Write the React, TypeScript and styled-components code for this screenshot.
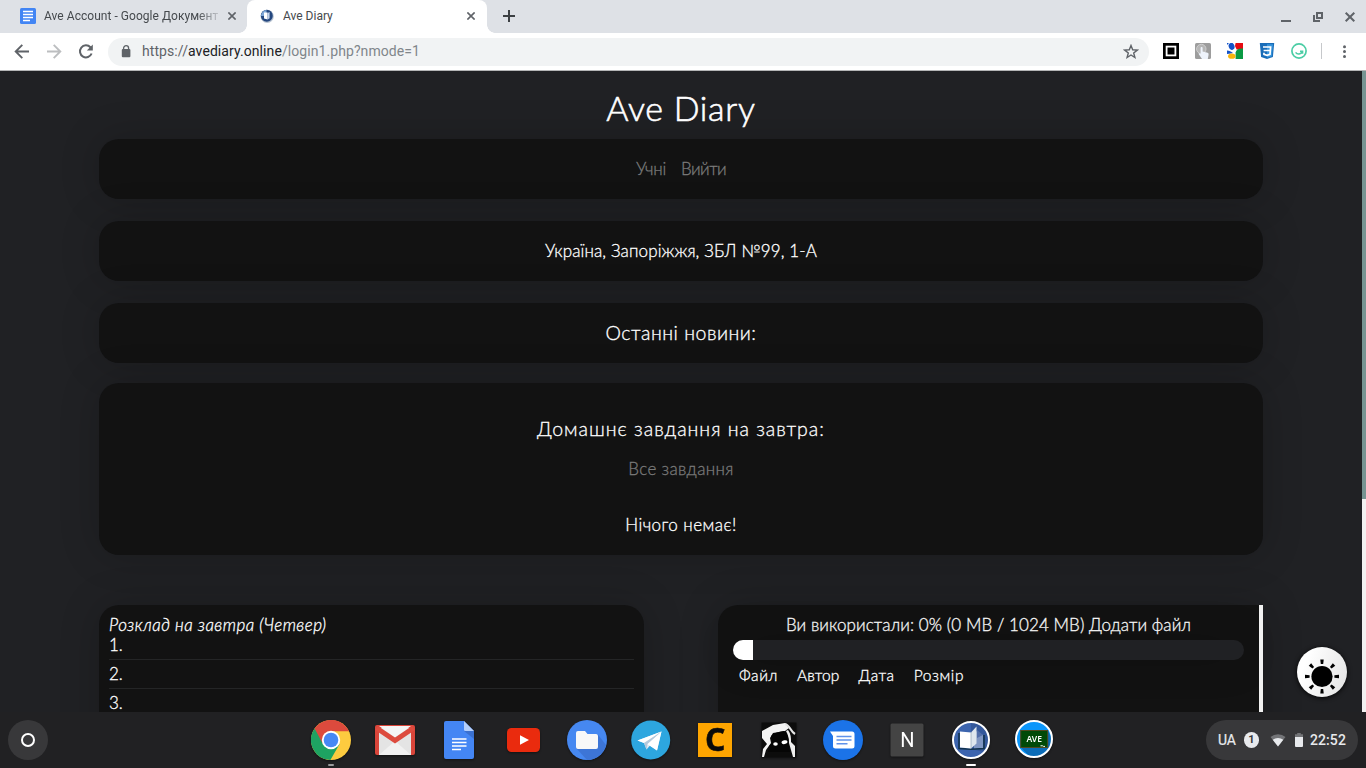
import React from "react";
import styled, { createGlobalStyle } from "styled-components";

const GlobalStyle = createGlobalStyle`
  * { box-sizing: border-box; }
  html, body { margin: 0; padding: 0; overflow: hidden; }
  body { font-family: Roboto, sans-serif; background: #202124; }
  svg { display: block; flex: none; }
`;

const Screen = styled.div`
  width: 1366px;
  height: 768px;
  display: flex;
  flex-direction: column;
  overflow: hidden;
`;

/* ---------- browser chrome ---------- */

const TabStrip = styled.div`
  height: 33px;
  flex: none;
  display: flex;
  background: #dee1e6;
`;

const Tab = styled.div<{ $active?: boolean; $width: number }>`
  position: relative;
  width: ${(p) => p.$width}px;
  height: 33px;
  padding: 0 ${(p) => (p.$active ? 12 : 11)}px 1px ${(p) => (p.$active ? 12 : 20)}px;
  display: flex;
  align-items: center;
  background: ${(p) => (p.$active ? "#fff" : "transparent")};
  border-radius: 8px 8px 0 0;
  ${(p) =>
    p.$active &&
    `&::before, &::after {
      content: "";
      position: absolute;
      bottom: 0;
      width: 8px;
      height: 8px;
    }
    &::before { left: -8px; background: radial-gradient(circle at 0 0, transparent 7.5px, #fff 8px); }
    &::after { right: -8px; background: radial-gradient(circle at 100% 0, transparent 7.5px, #fff 8px); }`}
`;

const TabTitle = styled.span<{ $fade?: boolean }>`
  flex: 1;
  margin: 0 10px 0 8px;
  font-size: 12px;
  line-height: 16px;
  letter-spacing: ${(p) => (p.$fade ? "0.04px" : "0")};
  color: #45494d;
  white-space: nowrap;
  overflow: hidden;
  ${(p) => p.$fade && "mask-image: linear-gradient(90deg, #000 88%, transparent 103%);"}
`;

const NewTab = styled.div`
  width: 44px;
  display: flex;
  align-items: center;
  justify-content: center;
  padding-bottom: 1px;
`;

const WindowButtons = styled.div`
  margin-left: auto;
  display: flex;
  align-items: center;
  & > svg { margin: 1px 8px 0; }
`;

const Toolbar = styled.div`
  height: 38px;
  flex: none;
  display: flex;
  align-items: center;
  background: #fff;
  border-bottom: 1px solid #b4b5b6;
`;

const NavButtons = styled.div`
  width: 108px;
  display: flex;
  gap: 12px;
  padding-left: 12px;
`;

const Omnibox = styled.div`
  width: 1041px;
  height: 28px;
  border-radius: 14px;
  background: #f1f3f4;
  display: flex;
  align-items: center;
  padding: 0 10px 0 13px;
`;

const Url = styled.span`
  margin: -2px 0 0 11px;
  flex: 1;
  font-size: 14px;
  line-height: 16px;
  letter-spacing: 0.08px;
  color: #80868b;
  & > b { font-weight: 400; color: #202124; }
  & > i { font-style: normal; color: #5f6368; }
`;

const Extensions = styled.div`
  display: flex;
  align-items: center;
  gap: 16px;
  margin: -1px 0 0 14px;
`;

const Separator = styled.div`
  width: 1px;
  height: 16px;
  margin: -1px 15px 0 14px;
  background: #c6c8cb;
`;

/* ---------- page ---------- */

const Viewport = styled.div`
  height: 641px;
  flex: none;
  display: flex;
  overflow: hidden;
  background: #202124;
`;

const Page = styled.main`
  position: relative;
  width: 1362px;
  padding: 0 99px;
  font-family: Lato, "Noto Sans", sans-serif;
  font-weight: 300;
  color: #fff;
  -webkit-text-stroke: 0.3px currentColor;
  overflow: hidden;
`;

const PageScroll = styled.div`
  width: 4px;
  background: #f1f1f1;
`;

const PageThumb = styled.div`
  height: 428px;
  background: #769492;
`;

const Line = styled.div<{ $size: number; $track?: number; $muted?: boolean; $top?: number }>`
  margin-top: ${(p) => p.$top ?? 0}px;
  font-size: ${(p) => p.$size}px;
  line-height: 20px;
  letter-spacing: ${(p) => p.$track ?? 0}px;
  color: ${(p) => (p.$muted ? "#7a7a7a" : "#fff")};
  -webkit-text-stroke-color: currentColor;
  white-space: nowrap;
`;

const Title = styled.h1`
  height: 68px;
  margin: 0;
  padding-top: 17px;
  font-size: 34px;
  font-weight: 300;
  line-height: 40px;
  letter-spacing: 0.7px;
  text-align: center;
  -webkit-text-stroke: 0.6px #fff;
`;

const Card = styled.section<{ $height: number; $gap: number }>`
  height: ${(p) => p.$height}px;
  margin-bottom: ${(p) => p.$gap}px;
  border-radius: 20px;
  background: #121212;
  box-shadow: 0 0 40px rgba(0, 0, 0, 0.2);
  display: flex;
  flex-direction: column;
  align-items: center;
  justify-content: center;
`;

const Menu = styled.nav`
  display: flex;
  gap: 15px;
`;

const Homework = styled(Card)`
  justify-content: flex-start;
  padding-top: 36px;
`;

const Columns = styled.div`
  display: flex;
  justify-content: space-between;
`;

const Panel = styled.section<{ $squareRight?: boolean }>`
  width: 545px;
  height: 200px;
  border-radius: ${(p) => (p.$squareRight ? "20px 0 0 20px" : "20px")};
  background: #121212;
  box-shadow: 0 0 40px rgba(0, 0, 0, 0.2);
  display: flex;
`;

const Schedule = styled.div`
  flex: 1;
  padding: 10px 10px 0;
`;

const Day = styled(Line)`
  font-style: italic;
`;

const Lesson = styled.div`
  height: 20px;
  margin-bottom: 9px;
  position: relative;
  font-size: 17px;
  line-height: 19px;
  &::after {
    content: "";
    position: absolute;
    left: 0;
    right: 0;
    bottom: -5px;
    height: 1px;
    background: #242526;
  }
`;

const Storage = styled.div`
  flex: 1;
  padding: 10px 15px 0;
  display: flex;
  flex-direction: column;
  align-items: center;
`;

const Meter = styled.div`
  width: 511px;
  height: 20px;
  margin-top: 5px;
  border-radius: 10px;
  background: #202124;
  box-shadow: 0 0 40px rgba(0, 0, 0, 0.2);
  overflow: hidden;
`;

const MeterFill = styled.div`
  width: 20px;
  height: 20px;
  background: #fff;
`;

const Headings = styled.div`
  align-self: stretch;
  display: flex;
  gap: 19px;
  padding: 5px 0 0 6px;
`;

const PanelScroll = styled.div`
  width: 4px;
  background: #f1f1f1;
`;

const ThemeToggle = styled.button`
  position: absolute;
  left: 1297px;
  top: 576px;
  width: 50px;
  height: 50px;
  padding: 0;
  border: 0;
  border-radius: 50%;
  background: linear-gradient(110deg, #fff 20%, #e2e2e2);
  box-shadow: 0 1px 5px rgba(0, 0, 0, 0.9);
`;

/* ---------- shelf ---------- */

const Shelf = styled.footer`
  height: 56px;
  flex: none;
  display: grid;
  grid-template-columns: 299px 768px 299px;
  align-items: center;
  background: #212123;
`;

const Launcher = styled.div`
  width: 40px;
  height: 40px;
  margin-left: 8px;
  border-radius: 50%;
  background: #38383a;
  display: flex;
  align-items: center;
  justify-content: center;
`;

const Ring = styled.div`
  width: 14px;
  height: 14px;
  border: 2px solid #fff;
  border-radius: 50%;
`;

const Apps = styled.div`
  display: flex;
`;

const ShelfApp = styled.div<{ $mark?: string; $markWidth?: number }>`
  position: relative;
  width: 64px;
  height: 56px;
  display: flex;
  align-items: center;
  justify-content: center;
  & > svg { filter: drop-shadow(0 1px 1px rgba(0, 0, 0, 0.45)); }
  ${(p) =>
    p.$mark &&
    `&::after {
      content: "";
      position: absolute;
      bottom: 2px;
      left: ${32 - (p.$markWidth ?? 6) / 2}px;
      width: ${p.$markWidth}px;
      height: 2px;
      border-radius: 1px;
      background: ${p.$mark};
    }`}
`;

const Tray = styled.div`
  width: 152px;
  height: 40px;
  margin-left: auto;
  margin-right: 8px;
  padding: 0 12px;
  border-radius: 20px;
  background: #38383a;
  display: flex;
  align-items: center;
  color: #e8eaed;
  font-size: 14px;
  font-weight: 500;
`;

const Language = styled.span`
  font-size: 14px;
  font-weight: 400;
  letter-spacing: -0.2px;
  -webkit-text-stroke: 0.2px #e8eaed;
`;

const Badge = styled.span`
  width: 16px;
  height: 16px;
  margin: 0 11px 0 8px;
  border-radius: 50%;
  background: #e8eaed;
  color: #37383b;
  font-size: 11px;
  font-weight: 700;
  line-height: 16px;
  text-align: center;
`;

const Clock = styled.span`
  margin-left: 7px;
  letter-spacing: 0.1px;
`;

const CloseX = () => (
  <svg width="8" height="8" viewBox="0 0 8 8" stroke="#5f6368" strokeWidth="1.6">
    <path d="M0.4 0.4 7.6 7.6M7.6 0.4 0.4 7.6" />
  </svg>
);

const RAYS = [0, 45, 90, 135, 180, 225, 270, 315];

export default function App() {
  return (
    <Screen>
      <GlobalStyle />
      <TabStrip>
        <Tab $width={247}>
          <svg width="16" height="16" viewBox="0 0 16 16">
            <rect width="16" height="16" rx="1.5" fill="#4285f4" />
            <path d="M3 4h10M3 7h10M3 10h10M3 13h7" transform="translate(0 -.5)" stroke="#fff" strokeWidth="1.6" />
          </svg>
          <TabTitle $fade>Ave Account - Google Документы</TabTitle>
          <CloseX />
        </Tab>
        <Tab $width={240} $active>
          <svg width="16" height="16" viewBox="0 0 16 16">
            <circle cx="8.2" cy="8.4" r="6.6" fill="#b9c4d2" />
            <circle cx="7.8" cy="7.8" r="6" fill="#24477f" />
            <path d="M2 8a6 6 0 0 1 5.500-6V5L4.500 8z" fill="#7fa8d8" />
            <path d="M5 4.600h3.600v6.800L5 10.600z" fill="#fff" />
            <path d="M8.600 5 10.600 4v6.200l-2 1.200z" fill="#c5d5ec" />
          </svg>
          <TabTitle>Ave Diary</TabTitle>
          <CloseX />
        </Tab>
        <NewTab>
          <svg width="12" height="12" viewBox="0 0 12 12" stroke="#3c4043" strokeWidth="2">
            <path d="M6 0v12M0 6h12" />
          </svg>
        </NewTab>
        <WindowButtons>
          <svg width="16" height="16" viewBox="0 0 16 16"><path d="M3 12h10" stroke="#5f6368" strokeWidth="2" /></svg>
          <svg width="16" height="16" viewBox="0 0 16 16" fill="none" stroke="#5f6368" strokeWidth="2">
            <path d="M7 4h5v5H7z" />
            <path d="M4 6v6h6" />
          </svg>
          <svg width="16" height="16" viewBox="0 0 16 16"><path d="m3.700 3.700 8.600 8.600M12.300 3.700l-8.600 8.600" stroke="#5f6368" strokeWidth="2" /></svg>
        </WindowButtons>
      </TabStrip>

      <Toolbar>
        <NavButtons>
          <svg width="20" height="20" viewBox="0 0 20 20" fill="none" stroke="#5f6368" strokeWidth="1.9">
            <path d="M17 9.500H4M10.300 2.900 3.700 9.500l6.600 6.600" />
          </svg>
          <svg width="20" height="20" viewBox="0 0 20 20" fill="none" stroke="#bcbec0" strokeWidth="1.900">
            <path d="M3 9.500h13M9.700 2.900l6.600 6.600-6.600 6.600" />
          </svg>
          <svg width="20" height="20" viewBox="0 0 20 20" fill="none" stroke="#5f6368" strokeWidth="2">
            <path d="M15.600 11.500A6 6 0 1 1 14.400 5.300L15.600 6.500" />
            <path d="M16.800 2.500v6h-6z" fill="#5f6368" stroke="none" />
          </svg>
        </NavButtons>
        <Omnibox>
          <svg width="10" height="14" viewBox="0 0 10 14">
            <rect x="0.800" y="4" width="8.600" height="8.200" rx="1" fill="#5f6368" />
            <path d="M2.600 4.500V3.200a2.500 2.500 0 0 1 5 0v1.300" fill="none" stroke="#5f6368" strokeWidth="1.300" />
          </svg>
          <Url><i>https://</i><b>avediary.online</b>/login1.php?nmode=1</Url>
          <svg width="16" height="16" viewBox="0 0 16 16" fill="none" stroke="#5f6368" strokeWidth="1.400">
            <path d="m8 1.500 1.700 4.300 4.600.3-3.600 2.900 1.200 4.500L8 11l-3.900 2.500 1.200-4.500L1.700 6.100l4.600-.3z" />
          </svg>
        </Omnibox>
        <Extensions>
          <svg width="16" height="16" viewBox="0 0 16 16">
            <rect width="16" height="16" fill="#000" />
            <rect x="3.600" y="3.600" width="8.800" height="8.800" fill="#000" stroke="#fff" strokeWidth="1.800" />
          </svg>
          <svg width="16" height="16" viewBox="0 0 16 16">
            <rect width="16" height="16" rx="1.500" fill="#9d9d9d" />
            <circle cx="6.300" cy="6" r="4.700" fill="#b5b5b5" stroke="#cfcfcf" />
            <path d="M5.600 5c0-1.400 2-1.400 2 0v3.600l5 1.200c1.200.4 1.200 1.400.8 3l-.6 3.200H7L4 11.400c-.8-1 .3-1.800 1.600-.4z" fill="#eef3fb" />
          </svg>
          <svg width="16" height="16" viewBox="0 0 16 16">
            <path fill="#fff" d="M0 0h16v16H0z" />
            <path fill="#e60b12" d="M8.600 0H16v6.600H9.600L8 3z" />
            <path fill="#0a9a43" d="M16 5.600V16H8.600V9.400C9.400 6.600 11.600 5 16 5.600z" />
            <ellipse cx="4.600" cy="3.400" rx="2.900" ry="3.600" transform="rotate(-18 4.600 3.400)" fill="#1453c8" />
            <path fill="#1453c8" d="M0 0h2L0 2zM0 7.400c2.400.4 4 .7 6 2.600L3.800 10.600 0 11z" />
            <ellipse cx="4.800" cy="13.200" rx="3.700" ry="2.600" fill="#f8b60c" />
          </svg>
          <svg width="16" height="16" viewBox="0 0 16 16">
            <path fill="#1a6db8" d="M.8 0h14.400l-1.300 14L8 16l-5.900-2z" />
            <path fill="#3694dc" d="M8 1.200h6l-1.100 12L8 14.800z" />
            <path d="M4 4h7.600l-.6 7.300L8 12.400l-3-1-.1-1.700M4.600 7.500h6.400" fill="none" stroke="#fff" strokeWidth="1.700" />
          </svg>
          <svg width="16" height="16" viewBox="0 0 16 16" fill="none" stroke="#4bcda5">
            <circle cx="8" cy="8" r="7.100" strokeWidth="1.700" />
            <path d="M4.600 9.400a3.700 3.700 0 0 0 6.600-.8M9 8.200h2.600v2.600" strokeWidth="1.500" />
          </svg>
        </Extensions>
        <Separator />
        <svg width="16" height="16" viewBox="0 0 16 16" fill="#5f6368">
          <circle cx="7.500" cy="2.800" r="1.500" /><circle cx="7.500" cy="7.600" r="1.500" /><circle cx="7.500" cy="12.400" r="1.500" />
        </svg>
      </Toolbar>

      <Viewport>
        <Page>
          <Title>Ave Diary</Title>
          <Card $height={60} $gap={22}>
            <Menu>
              <Line $size={17} $track={-0.25} $muted>Учні</Line>
              <Line $size={17} $track={-0.55} $muted>Вийти</Line>
            </Menu>
          </Card>
          <Card $height={60} $gap={22}>
            <Line $size={17} $track={0.13}>Україна, Запоріжжя, ЗБЛ №99, 1-А</Line>
          </Card>
          <Card $height={60} $gap={20}>
            <Line $size={19.5} $track={0.5}>Останні новини:</Line>
          </Card>
          <Homework $height={172} $gap={50}>
            <Line $size={19.5} $track={0.97}>Домашнє завдання на завтра:</Line>
            <Line $size={17} $track={0.35} $muted $top={20}>Все завдання</Line>
            <Line $size={17} $track={0.45} $top={36}>Нічого немає!</Line>
          </Homework>
          <Columns>
            <Panel>
              <Schedule>
                <Day $size={17} $track={0.43}>Розклад на завтра (Четвер)</Day>
                <Lesson>1.</Lesson>
                <Lesson>2.</Lesson>
                <Lesson>3.</Lesson>
              </Schedule>
            </Panel>
            <Panel $squareRight>
              <Storage>
                <Line $size={17} $track={0.08}>Ви використали: 0% (0 MB / 1024 MB) Додати файл</Line>
                <Meter><MeterFill /></Meter>
                <Headings>
                  <Line $size={15.5} $track={0.6}>Файл</Line>
                  <Line $size={15.5} $track={0.1}>Автор</Line>
                  <Line $size={15.5} $track={0.55}>Дата</Line>
                  <Line $size={15.5} $track={0.65}>Розмір</Line>
                </Headings>
              </Storage>
              <PanelScroll />
            </Panel>
          </Columns>
          <ThemeToggle aria-label="Theme">
            <svg width="50" height="50" viewBox="0 0 50 50">
              <circle cx="25" cy="29.500" r="10.600" />
              {RAYS.map((a) => (
                <path key={a} d="M23.300 12.500h3.400l-.5 4.600h-2.400z" transform={`rotate(${a} 25 29.500)`} />
              ))}
            </svg>
          </ThemeToggle>
        </Page>
        <PageScroll><PageThumb /></PageScroll>
      </Viewport>

      <Shelf>
        <Launcher><Ring /></Launcher>
        <Apps>
          <ShelfApp $mark="#9a9b9d" $markWidth={6}>
            <svg width="40" height="40" viewBox="0 0 40 40">
              <circle cx="20" cy="20" r="20" fill="#fdcb3f" />
              <path d="M20 20 3.600 8.600A20 20 0 0 0 19.400 40L28.600 24z" fill="#1ea362" />
              <path d="M3.600 8.600A20 20 0 0 1 38 11.200H20l-8.500 12z" fill="#dc4a3d" />
              <circle cx="20" cy="20" r="9.200" fill="#fff" />
              <circle cx="20" cy="20" r="7.300" fill="#4688f4" />
            </svg>
          </ShelfApp>
          <ShelfApp>
            <svg width="40" height="30" viewBox="0 0 40 30">
              <rect width="40" height="30" rx="2" fill="#d9453a" />
              <path d="M4 3h32v27H4z" fill="#e4e4e4" />
              <path d="M4 30 20 16l16 14z" fill="#f1f1f1" />
              <path d="M4 1h32L20 12.500z" fill="#f5f5f5" />
              <path d="M1.500 3 20 15.500 38.500 3" fill="none" stroke="#dd4b3e" strokeWidth="5" />
            </svg>
          </ShelfApp>
          <ShelfApp>
            <svg width="30" height="38" viewBox="0 0 30 38">
              <path d="M2 0h18l10 10v26a2 2 0 0 1-2 2H2a2 2 0 0 1-2-2V2a2 2 0 0 1 2-2z" fill="#4486f4" />
              <path d="m20 10 10 8v-8z" fill="#3a70d0" />
              <path d="M20 0v8.500a1.500 1.500 0 0 0 1.500 1.500H30z" fill="#b4cffb" />
              <path d="M8 18h14.500M8 21.500h14.500M8 25h14.500M8 28.500h9" stroke="#fff" strokeWidth="1.700" />
            </svg>
          </ShelfApp>
          <ShelfApp>
            <svg width="33" height="24" viewBox="0 0 33 24">
              <rect width="33" height="24" rx="4.500" fill="#ea2b0e" />
              <path d="M13 7.200 22 12l-9 4.800z" fill="#fff" />
            </svg>
          </ShelfApp>
          <ShelfApp>
            <svg width="40" height="40" viewBox="0 0 40 40">
              <circle cx="20" cy="20" r="20" fill="#4688f1" />
              <path d="M9 28 20 39.900A20 20 0 0 0 39 25L30.500 14z" fill="#3d75d6" />
              <path d="M11 11h7l2.500 3H29a2 2 0 0 1 2 2v11a2 2 0 0 1-2 2H11a2 2 0 0 1-2-2V13a2 2 0 0 1 2-2z" fill="#f8f8f8" />
            </svg>
          </ShelfApp>
          <ShelfApp>
            <svg width="40" height="40" viewBox="0 0 40 40">
              <circle cx="19.700" cy="20" r="19.500" fill="#2da6df" />
              <path d="m6.500 20.500 24-9-4.500 19-7-5-3.500 4-2.500-6.500z" fill="#dfe9f3" />
              <path d="m6.500 20.500 24-9L13 23zM30.500 11.500 26 30.500 16 24z" fill="#fff" />
              <path d="m13 23 2.500 6.500 1-5.500 14-12.500z" fill="#b4c9dc" />
            </svg>
          </ShelfApp>
          <ShelfApp>
            <svg width="34" height="34" viewBox="0 0 34 34">
              <rect width="34" height="34" fill="#fea500" />
              <text x="17.300" y="28.400" textAnchor="middle" fontFamily="Open Sans" fontWeight="700" fontSize="32" fill="#0a0a0a" stroke="#0a0a0a" strokeWidth="0.600">C</text>
            </svg>
          </ShelfApp>
          <ShelfApp>
            <svg width="36" height="36" viewBox="0 0 36 36">
              <rect x="0.500" y="0.500" width="35" height="35" fill="#0c0c0c" />
              <path d="M1 9 12 3l12-2 4 5-4 3-12 2-3 5 1 5-5 7-2 7H1l1-8 4-5-5-6z" fill="#f4f4f4" />
              <path d="M27 8c3 4 3 8 3 12l4 4v11h-2l-4-14c0-5-1-8-3-12z" fill="#efefef" />
              <path d="M24 2c5 1 5 7 10 10" fill="none" stroke="#e4e4e4" strokeWidth="2.200" />
              <path d="M10 14c3-3 7-4 13-5 4 3 5 8 4.500 13l1.500 8H7l1-6 3-3z" fill="#050505" />
              <ellipse cx="14.500" cy="22" rx="2.300" ry="1.700" fill="#fff" />
              <ellipse cx="23.500" cy="20.200" rx="3" ry="1.900" fill="#fff" transform="rotate(-12 23.500 20.200)" />
            </svg>
          </ShelfApp>
          <ShelfApp>
            <svg width="40" height="40" viewBox="0 0 40 40">
              <circle cx="20" cy="20" r="20" fill="#1b73e8" />
              <path d="M7 11.500h22a2.500 2.500 0 0 1 2.500 2.500v12a2.500 2.500 0 0 1-2.500 2.500H12.500A2.500 2.500 0 0 1 10 26V16z" fill="#fff" />
              <path d="M13.500 16.500h15M13.500 20h15M13.500 23.800h11" stroke="#5f92ea" strokeWidth="1.400" />
            </svg>
          </ShelfApp>
          <ShelfApp>
            <svg width="34" height="34" viewBox="0 0 34 34">
              <rect x="0.500" y="0.500" width="33" height="33" rx="1.500" fill="#444" />
              <text x="17.500" y="24" textAnchor="middle" fontFamily="Roboto" fontSize="20" fill="#fff">N</text>
            </svg>
          </ShelfApp>
          <ShelfApp $mark="#fff" $markWidth={10}>
            <svg width="38" height="38" viewBox="0 0 38 38">
              <circle cx="19" cy="19" r="18" fill="#3c64ae" />
              <path d="M19 1a18 18 0 0 1 18 18c0 5-2 9-5 12L19 28z" fill="#34589b" />
              <path d="M22 9l9 5v13l-9 1z" fill="#7f96c2" />
              <path d="M25 9l6 5-6 3z" fill="#526fa9" />
              <path d="M7 12v15.500l12 .8 13-.8V14" fill="none" stroke="#12324c" strokeWidth="1.600" />
              <path d="M8 10.500 19 11.500v16L8 26.500z" fill="#fff" />
              <path d="M19 11.500 24.500 5.500v17L19 27.500z" fill="#dfe7ee" />
              <path d="M19 11.500v16" stroke="#8fa3b5" strokeWidth="0.700" />
              <circle cx="19" cy="19" r="18" fill="none" stroke="#fff" strokeWidth="2" />
            </svg>
          </ShelfApp>
          <ShelfApp>
            <svg width="40" height="40" viewBox="0 0 40 40">
              <circle cx="19" cy="19" r="18" fill="#0b96fa" />
              <path d="M5.500 27 14 36a18 18 0 0 0 23-17l-4-8z" fill="#0b6cb8" />
              <rect x="5.700" y="10.500" width="27" height="17" fill="#014a08" stroke="#52481f" strokeWidth="1" />
              <text x="19.200" y="21.800" textAnchor="middle" fontFamily="Noto Sans" fontWeight="600" fontSize="8.500" fill="#fff">AVE</text>
              <path d="M25.500 25.800h2l1 .6h1.500" stroke="#fff" strokeWidth="1" fill="none" />
              <circle cx="19" cy="19" r="18" fill="none" stroke="#fff" strokeWidth="2" />
            </svg>
          </ShelfApp>
        </Apps>
        <Tray>
          <Language>UA</Language>
          <Badge>1</Badge>
          <svg width="16" height="14" viewBox="0 0 16 14">
            <path d="M8 13.500.5 4a11.500 11.500 0 0 1 15 0z" fill="#737477" />
            <path d="M8 13.500 2.700 6.800a8.500 8.500 0 0 1 10.600 0z" fill="#e8eaed" />
          </svg>
          <svg width="17" height="14" viewBox="0 0 17 14">
            <path d="M10.700 0h3.600v1.300h2.200V5h-8V1.300h2.200z" fill="#737477" transform="translate(.5)" />
            <path d="M9 4h8v9a1 1 0 0 1-1 1h-6a1 1 0 0 1-1-1z" fill="#e8eaed" />
          </svg>
          <Clock>22:52</Clock>
        </Tray>
      </Shelf>
    </Screen>
  );
}
